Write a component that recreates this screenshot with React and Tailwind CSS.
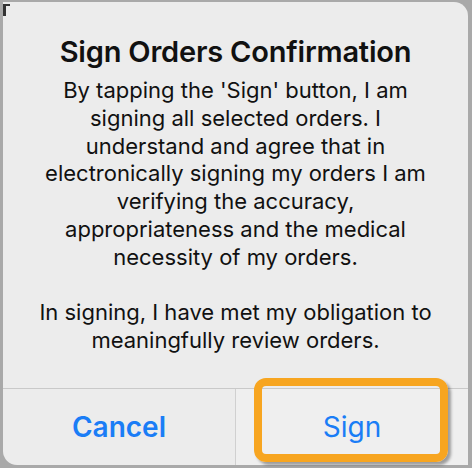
export default function App() {
  return (
    <div
      className="relative w-[472px] h-[468px] bg-[#a9a9a9] pt-[2px] pl-[3px] pr-[4px] pb-[3px]"
      style={{ fontFamily: 'Inter, "Noto Sans", sans-serif' }}
    >
      <div className="flex h-full flex-col rounded-tr-[14px] rounded-b-[14px] bg-[#ececec]">
        <div className="flex h-[386px] flex-col items-center pt-[32px] text-center text-[#111]">
          <h1 className="whitespace-nowrap text-[29px] font-semibold leading-[36px] tracking-[-0.2px]">
            Sign Orders Confirmation
          </h1>
          <p className="mt-[7px] whitespace-nowrap text-[22px] leading-[27.8px]">
            By tapping the 'Sign' button, I am
            <br />
            signing all selected orders. I
            <br />
            understand and agree that in
            <br />
            electronically signing my orders I am
            <br />
            verifying the accuracy,
            <br />
            appropriateness and the medical
            <br />
            necessity of my orders.
          </p>
          <p className="mt-[27.8px] whitespace-nowrap text-[22px] leading-[27.8px]">
            In signing, I have met my obligation to
            <br />
            meaningfully review orders.
          </p>
        </div>
        <div className="flex flex-1 border-t border-[#c9c9c9]">
          <div className="flex w-[233px] items-center justify-center border-r border-[#d0d0d0] text-[28px] font-semibold text-[#1a7df6]">
            Cancel
          </div>
          <div className="flex flex-1 items-center justify-center bg-[#efefef] text-[28px] text-[#1a7df6]">
            Sign
          </div>
        </div>
      </div>
      {/* highlight box over the Sign button */}
      <div className="absolute left-[254px] top-[378px] h-[84px] w-[194px] rounded-[12px] border-[8px] border-[#f7a520] shadow-[3px_3px_3px_rgba(0,0,0,0.35)]" />
      {/* cropped edge marks */}
      <div className="absolute left-[3px] top-[4px] h-[12px] w-[3px] bg-[#333]" />
      <div className="absolute left-[3px] top-[4px] h-[2px] w-[7px] bg-[#333]" />
    </div>
  );
}
